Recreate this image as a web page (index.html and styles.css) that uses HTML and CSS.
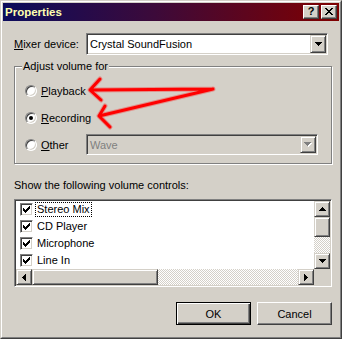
FILE: index.html
```html
<!DOCTYPE html>
<html>
<head>
<meta charset="utf-8">
<link rel="stylesheet" href="styles.css">
</head>
<body>
<div class="window">
  <div class="frame">
    <div class="titlebar">
      <span class="title">Properties</span>
      <div class="tbtns">
        <span class="tbtn">?</span>
        <span class="tbtn"><svg width="8" height="7" viewBox="0 0 8 7" shape-rendering="crispEdges"><path d="M0 0h2v1h-2zM6 0h2v1h-2zM1 1h2v1h-2zM5 1h2v1h-2zM2 2h4v1h-4zM3 3h2v1h-2zM2 4h4v1h-4zM1 5h2v1h-2zM5 5h2v1h-2zM0 6h2v1h-2zM6 6h2v1h-2z" fill="#000"/></svg></span>
      </div>
    </div>
    <div class="content">
      <div class="mixer">
        <span class="lbl"><u>M</u>ixer device:</span>
        <div class="combo">
          <span class="ctext">Crystal SoundFusion</span>
          <span class="ddbtn"><svg width="7" height="4" viewBox="0 0 7 4" shape-rendering="crispEdges"><path d="M0 0h7v1h-7zM1 1h5v1h-5zM2 2h3v1h-3zM3 3h1v1h-1z" fill="#000"/></svg></span>
        </div>
      </div>
      <fieldset class="group">
        <legend>Adjust volume for</legend>
        <div class="opts">
          <div class="opt"><span class="radio"></span><span><u>P</u>layback</span></div>
          <div class="opt"><span class="radio on"><span class="dot"></span></span><span><u>R</u>ecording</span></div>
          <div class="opt"><span class="radio"></span><span class="optlbl"><u>O</u>ther</span>
            <div class="combo disabled">
              <span class="ctext">Wave</span>
              <span class="ddbtn"><svg width="8" height="5" viewBox="0 0 8 5" shape-rendering="crispEdges"><path d="M1 1h7v1h-7zM2 2h5v1h-5zM3 3h3v1h-3zM4 4h1v1h-1z" fill="#fff"/><path d="M0 0h7v1h-7zM1 1h5v1h-5zM2 2h3v1h-3zM3 3h1v1h-1z" fill="#808080"/></svg></span>
            </div>
          </div>
        </div>
      </fieldset>
      <div class="caption">Show the following volume controls:</div>
      <div class="listbox">
        <div class="listmain">
          <div class="items">
            <div class="item"><span class="check"><svg width="7" height="7" viewBox="0 0 7 7" shape-rendering="crispEdges"><path d="M6 0h1v1h-1zM5 1h2v1h-2zM0 2h1v1h-1zM4 2h3v1h-3zM0 3h2v1h-2zM3 3h3v1h-3zM0 4h5v1h-5zM1 5h3v1h-3zM2 6h1v1h-1z" fill="#000"/></svg></span><span class="itext focus">Stereo Mix</span></div>
            <div class="item"><span class="check"><svg width="7" height="7" viewBox="0 0 7 7" shape-rendering="crispEdges"><path d="M6 0h1v1h-1zM5 1h2v1h-2zM0 2h1v1h-1zM4 2h3v1h-3zM0 3h2v1h-2zM3 3h3v1h-3zM0 4h5v1h-5zM1 5h3v1h-3zM2 6h1v1h-1z" fill="#000"/></svg></span><span class="itext">CD Player</span></div>
            <div class="item"><span class="check"><svg width="7" height="7" viewBox="0 0 7 7" shape-rendering="crispEdges"><path d="M6 0h1v1h-1zM5 1h2v1h-2zM0 2h1v1h-1zM4 2h3v1h-3zM0 3h2v1h-2zM3 3h3v1h-3zM0 4h5v1h-5zM1 5h3v1h-3zM2 6h1v1h-1z" fill="#000"/></svg></span><span class="itext">Microphone</span></div>
            <div class="item"><span class="check"><svg width="7" height="7" viewBox="0 0 7 7" shape-rendering="crispEdges"><path d="M6 0h1v1h-1zM5 1h2v1h-2zM0 2h1v1h-1zM4 2h3v1h-3zM0 3h2v1h-2zM3 3h3v1h-3zM0 4h5v1h-5zM1 5h3v1h-3zM2 6h1v1h-1z" fill="#000"/></svg></span><span class="itext">Line In</span></div>
          </div>
          <div class="vscroll">
            <span class="sbtn"><svg width="7" height="4" viewBox="0 0 7 4" shape-rendering="crispEdges"><path d="M3 0h1v1h-1zM2 1h3v1h-3zM1 2h5v1h-5zM0 3h7v1h-7z" fill="#000"/></svg></span>
            <span class="sbtn vthumb"></span>
            <span class="track"></span>
            <span class="sbtn"><svg width="7" height="4" viewBox="0 0 7 4" shape-rendering="crispEdges"><path d="M0 0h7v1h-7zM1 1h5v1h-5zM2 2h3v1h-3zM3 3h1v1h-1z" fill="#000"/></svg></span>
          </div>
        </div>
        <div class="hscroll">
          <span class="sbtn"><svg width="4" height="7" viewBox="0 0 4 7" shape-rendering="crispEdges"><path d="M3 0h1v7h-1zM2 1h1v5h-1zM1 2h1v3h-1zM0 3h1v1h-1z" fill="#000"/></svg></span>
          <span class="sbtn hthumb"></span>
          <span class="track"></span>
          <span class="sbtn"><svg width="4" height="7" viewBox="0 0 4 7" shape-rendering="crispEdges"><path d="M0 0h1v7h-1zM1 1h1v5h-1zM2 2h1v3h-1zM3 3h1v1h-1z" fill="#000"/></svg></span>
          <span class="corner"></span>
        </div>
      </div>
      <div class="buttons">
        <button class="btn default">OK</button>
        <button class="btn">Cancel</button>
      </div>
    </div>
  </div>
  <svg class="annot" width="342" height="339" viewBox="0 0 342 339">
    <g fill="none" stroke-linecap="round" stroke-linejoin="round">
      <path d="M213 89 L90 90 M100 79 L90 90 L101 100 M213 89 L99 116 M105 106 L99 116 L110 127" stroke="rgba(255,0,0,0.3)" stroke-width="5"/>
      <path d="M213 89 L90 90 M100 79 L90 90 L101 100 M213 89 L99 116 M105 106 L99 116 L110 127" stroke="#f00" stroke-width="3"/>
    </g>
  </svg>
</div>
</body>
</html>
```

FILE: styles.css
```css
* { box-sizing: border-box; }

body {
  margin: 0;
  background: #d4d0c8;
  font-family: "Liberation Sans", Arial, sans-serif;
  font-size: 11px;
  color: #000;
}

.window {
  position: relative;
  width: 342px;
  height: 339px;
  border: 1px solid;
  border-color: #d4d0c8 #404040 #404040 #d4d0c8;
  background: #d4d0c8;
}

.frame {
  height: 100%;
  border: 1px solid;
  border-color: #fff #808080 #808080 #fff;
  padding: 1px;
  display: flex;
  flex-direction: column;
}

.titlebar {
  flex: none;
  height: 18px;
  background: linear-gradient(to right, #0c0c5c, #3c0a3a 45%, #800000);
  display: flex;
  align-items: center;
  padding: 0 2px;
}

.title {
  flex: 1;
  color: #ffffb0;
  font-weight: bold;
  font-size: 11.5px;
}

.tbtns { display: flex; gap: 2px; }

.tbtn {
  width: 16px;
  height: 14px;
  background: #d4d0c8;
  border: 1px solid;
  border-color: #fff #404040 #404040 #fff;
  box-shadow: inset -1px -1px #808080;
  display: flex;
  align-items: center;
  justify-content: center;
  font-weight: bold;
  font-size: 11px;
  line-height: 1;
  padding-bottom: 1px;
}

.content {
  flex: 1;
  padding: 12px 7px 0 11px;
  display: flex;
  flex-direction: column;
}

.mixer {
  display: flex;
  align-items: center;
  height: 22px;
}

.lbl { width: 72px; }

.combo {
  width: 242px;
  height: 22px;
  background: #fff;
  border: 1px solid;
  border-color: #808080 #fff #fff #808080;
  box-shadow: inset 1px 1px #404040, inset -1px -1px #d4d0c8;
  display: flex;
  align-items: center;
  padding-left: 3px;
}

.ctext { flex: 1; }

.ddbtn {
  width: 16px;
  height: 18px;
  margin-right: 1px;
  background: #d4d0c8;
  border: 1px solid;
  border-color: #d4d0c8 #404040 #404040 #d4d0c8;
  box-shadow: inset 1px 1px #fff, inset -1px -1px #808080;
  display: flex;
  align-items: center;
  justify-content: center;
}

.combo.disabled {
  width: 232px;
  height: 21px;
  background: #d4d0c8;
  color: #808080;
}

.combo.disabled .ddbtn { height: 17px; }

.group {
  margin: 5px 0 0;
  padding: 0 0 5px;
  border: 1px solid #808080;
  box-shadow: 1px 1px 0 #fff, inset 1px 1px 0 #fff;
  min-width: 0;
}

.group legend {
  margin-left: 7px;
  padding: 0 1px;
  line-height: 13px;
  background: #d4d0c8;
}

.opts { padding: 4px 0 0 10px; }

.opt {
  height: 27px;
  display: flex;
  align-items: center;
}

.radio {
  width: 12px;
  height: 12px;
  border-radius: 50%;
  background: #fff;
  border: 1px solid;
  border-color: #808080 #fff #fff #808080;
  box-shadow: inset 1px 1px #404040, inset -1px -1px #d4d0c8;
  margin-right: 4px;
  display: flex;
  align-items: center;
  justify-content: center;
}

.dot {
  width: 4px;
  height: 4px;
  border-radius: 50%;
  background: #000;
}

.optlbl { width: 45px; }

.caption {
  margin-top: 15px;
  line-height: 13px;
}

.listbox {
  margin-top: 7px;
  height: 88px;
  border: 1px solid;
  border-color: #808080 #fff #fff #808080;
  box-shadow: inset 1px 1px #404040, inset -1px -1px #d4d0c8;
  padding: 1px;
  display: flex;
  flex-direction: column;
}

.listmain {
  display: flex;
  height: 68px;
}

.items {
  flex: 1;
  background: #fff;
}

.item {
  height: 17px;
  display: flex;
  align-items: center;
  padding-left: 4px;
}

.check {
  width: 13px;
  height: 13px;
  background: #fff;
  border: 1px solid;
  border-color: #808080 #fff #fff #808080;
  box-shadow: inset 1px 1px #404040, inset -1px -1px #d4d0c8;
  display: flex;
  align-items: center;
  justify-content: center;
}

.itext {
  margin-left: 2px;
  padding: 0 1px;
  line-height: 13px;
  border: 1px solid transparent;
}

.itext.focus { border: 1px dotted #000; }

.vscroll {
  width: 16px;
  display: flex;
  flex-direction: column;
}

.sbtn {
  flex: none;
  width: 16px;
  height: 16px;
  background: #d4d0c8;
  border: 1px solid;
  border-color: #d4d0c8 #404040 #404040 #d4d0c8;
  box-shadow: inset 1px 1px #fff, inset -1px -1px #808080;
  display: flex;
  align-items: center;
  justify-content: center;
}

.vthumb { height: 20px; }

.track {
  flex: 1;
  background: conic-gradient(#d4d0c8 25%, #fff 0 50%, #d4d0c8 0 75%, #fff 0) 0 0 / 2px 2px;
}

.hscroll {
  display: flex;
  height: 16px;
}

.hthumb { width: 126px; }

.corner {
  width: 16px;
  height: 16px;
  background: #d4d0c8;
}

.buttons {
  margin-top: 15px;
  display: flex;
  justify-content: flex-end;
  gap: 6px;
}

.btn {
  width: 75px;
  height: 23px;
  padding: 0;
  font: inherit;
  color: #000;
  background: #d4d0c8;
  border: 1px solid;
  border-color: #fff #404040 #404040 #fff;
  box-shadow: inset -1px -1px #808080;
}

.btn.default {
  border: 1px solid #000;
  box-shadow: inset 1px 1px #fff, inset -1px -1px #404040, inset -2px -2px #808080;
}

.annot {
  position: absolute;
  top: -1px;
  left: -1px;
  pointer-events: none;
}
```
